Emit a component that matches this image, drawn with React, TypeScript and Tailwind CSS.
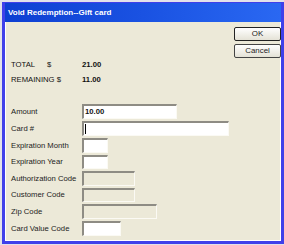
import React from 'react'

type Field = {
  label: string
  width: string
  height: string
  kind: 'white' | 'disabled'
  value?: string
  caret?: boolean
}

const fields: Field[] = [
  { label: 'Amount', width: 'w-[95px]', height: 'h-[15px]', kind: 'white', value: '10.00' },
  { label: 'Card #', width: 'w-[147px]', height: 'h-[15px]', kind: 'white', caret: true },
  { label: 'Expiration Month', width: 'w-[26px]', height: 'h-[15px]', kind: 'white' },
  { label: 'Expiration Year', width: 'w-[26px]', height: 'h-[14px]', kind: 'white' },
  { label: 'Authorization Code', width: 'w-[53px]', height: 'h-[15px]', kind: 'disabled' },
  { label: 'Customer Code', width: 'w-[53px]', height: 'h-[14px]', kind: 'disabled' },
  { label: 'Zip Code', width: 'w-[75px]', height: 'h-[15px]', kind: 'disabled' },
  { label: 'Card Value Code', width: 'w-[39px]', height: 'h-[15px]', kind: 'white' },
]

function XpButton({ label, isDefault }: { label: string; isDefault?: boolean }) {
  return (
    <div
      className={
        isDefault
          ? 'flex h-[14px] w-[47px] items-center justify-center rounded-[2px] border-[1.5px] border-[#222] bg-gradient-to-b from-white to-[#e4e2d6] text-[7.9px] text-[#222]'
          : 'flex h-[14px] w-[47px] items-center justify-center rounded-[2px] border border-[#444] bg-gradient-to-b from-white to-[#e4e2d6] text-[7.9px] text-[#222]'
      }
    >
      {label}
    </div>
  )
}

export default function App() {
  return (
    <div
      className="flex h-[245px] w-[284px] bg-[#e2e2ea] pb-[1px] pl-[2px] pt-[2px]"
      style={{ fontFamily: '"Liberation Sans", Arial, sans-serif' }}
    >
      <div className="flex flex-1 flex-col border-x-[3px] border-b-[3px] border-t border-[#4040ea]">
        {/* title bar */}
        <div className="flex h-[19px] items-center bg-gradient-to-r from-[#0e3fd2] via-[#1a52e2] to-[#2a68f2] pl-[3px]">
          <span className="text-[8px] font-bold text-white">Void Redemption--Gift card</span>
        </div>

        <div className="flex flex-1 flex-col border-x border-b border-white bg-[#ece9d8] pl-[5px]">
          <div className="-mr-[1px] ml-auto mt-[5px] flex flex-col gap-[3px]">
            <XpButton label="OK" isDefault />
            <XpButton label="Cancel" />
          </div>

          <div className="mt-[-1px] flex flex-col text-[7.7px] text-[#111]">
            <div className="flex h-[15px] items-center">
              <span className="w-[36px]">TOTAL</span>
              <span className="w-[35px]">$</span>
              <span className="font-bold">21.00</span>
            </div>
            <div className="flex h-[15px] items-center">
              <span className="w-[71px]">REMAINING $</span>
              <span className="font-bold">11.00</span>
            </div>
          </div>

          <div className="mt-[17px] flex flex-col gap-[2px] text-[7.7px] text-[#222]">
            {fields.map((f) => (
              <div key={f.label} className={`flex items-center ${f.height}`}>
                <span className="w-[71px] shrink-0">{f.label}</span>
                <div
                  className={`relative flex h-full items-center border-l-2 border-t-2 border-b border-r border-b-[#fbfaf4] border-l-[#8e8c84] border-r-[#fbfaf4] border-t-[#8e8c84] pl-[1px] ${f.width} ${
                    f.kind === 'white' ? 'bg-white' : 'bg-[#ece9d8]'
                  }`}
                >
                  {f.value && <span className="font-bold text-[#111]">{f.value}</span>}
                  {f.caret && <span className="h-[10px] w-[1px] bg-black" />}
                </div>
              </div>
            ))}
          </div>
        </div>
      </div>
    </div>
  )
}
